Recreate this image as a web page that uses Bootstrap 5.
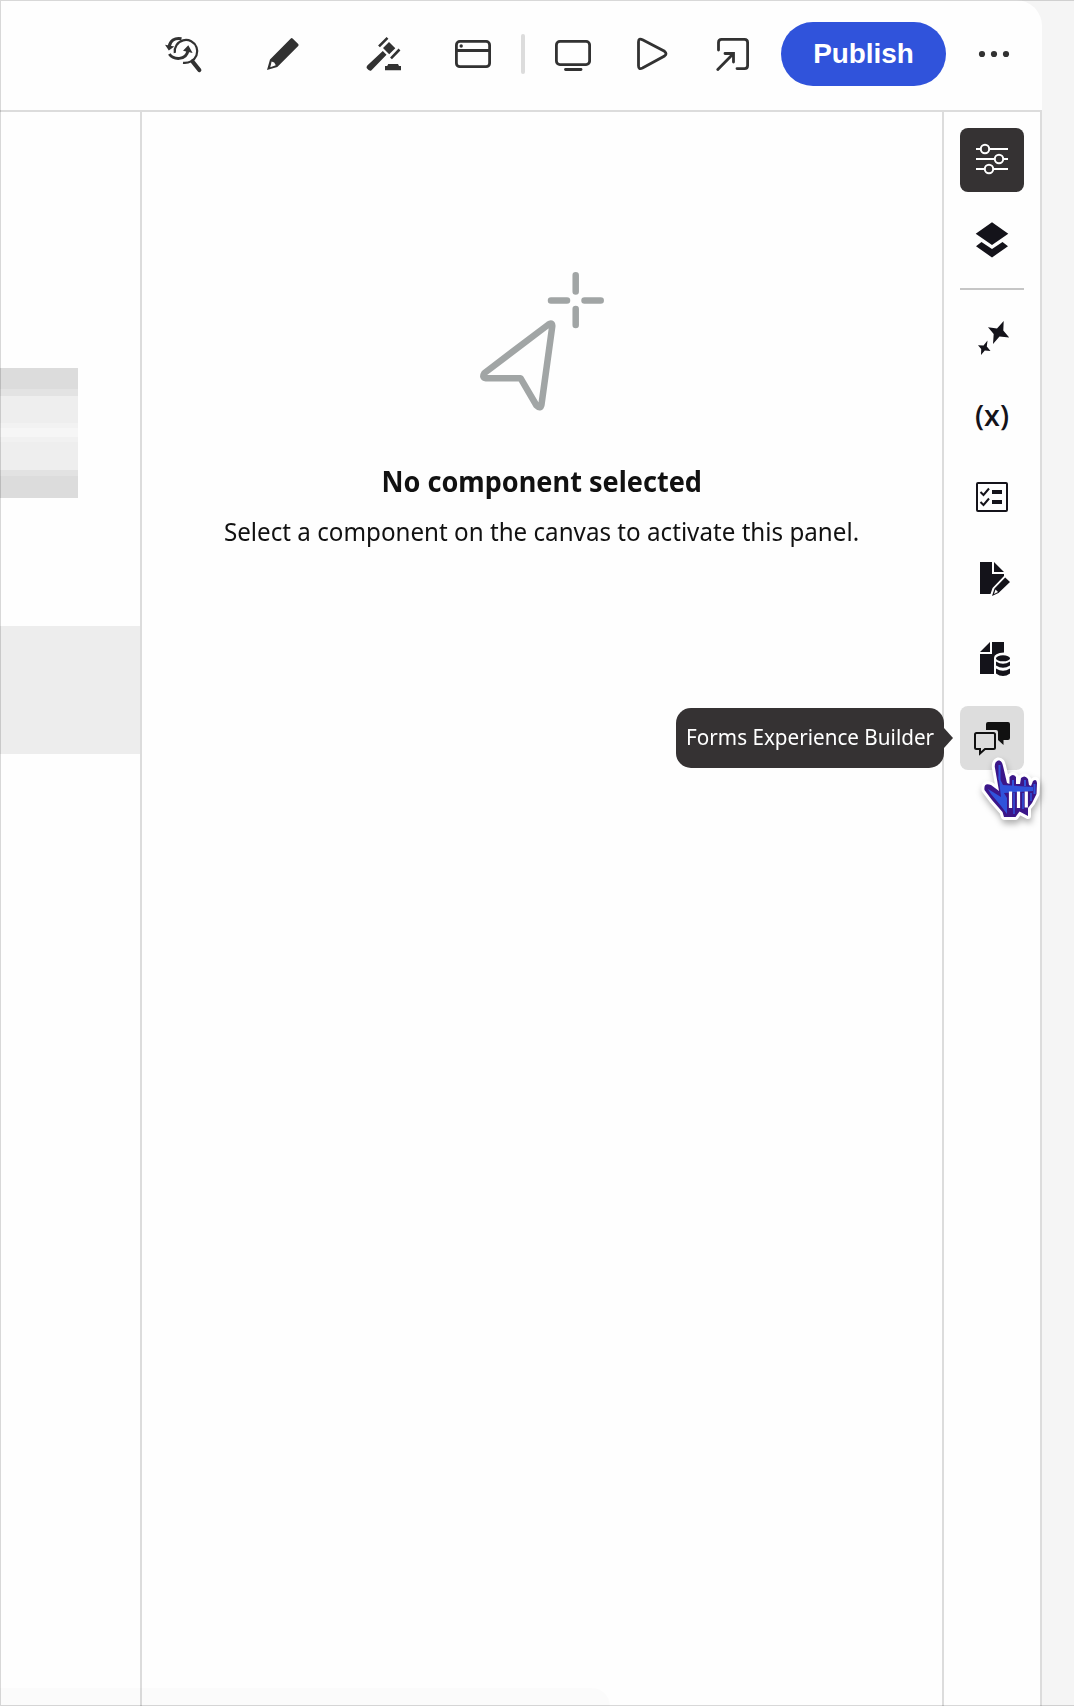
<!DOCTYPE html>
<html lang="en">
<head>
<meta charset="utf-8">
<meta name="viewport" content="width=device-width, initial-scale=1">
<title>Forms editor</title>
<link href="https://cdn.jsdelivr.net/npm/bootstrap@5.3.0/dist/css/bootstrap.min.css" rel="stylesheet">
<style>
body{background:#f5f5f5;font-family:"Noto Sans","Open Sans",sans-serif;color:#111;height:1706px;overflow:hidden}
.frame-line{inset:0;border:solid rgba(0,0,0,.15);border-width:1px 0 1px 1px;pointer-events:none;z-index:9}
.app{width:1042px;height:1706px}
.topbar{height:112px;background:#fefefe;border-bottom:2px solid #dcdcdc;border-radius:0 26px 0 0;padding:22px 32px 24px 165px}
.workspace{background:#fefefe;border-right:2px solid #dcdcdc}
.tool{display:block;border:0;padding:0;background:none;color:#323232}
.tool svg,.rail-btn svg{display:block}
.sep{width:4px;height:40px;border-radius:2px;background:#dcdcdc}
.publish{width:165px;height:64px;font:bold 27.9px "Liberation Sans",sans-serif;background:#3053db;color:#fff;padding:0}
.canvas-col{width:140px;padding-top:256px}
.preview{width:78px;height:130px;background:linear-gradient(#dcdcdc 0 21px,#e3e3e3 21px 28px,#eee 28px 55px,#f2f2f2 55px 60px,#f6f6f6 60px 69px,#f1f1f1 69px 74px,#eee 74px 102px,#e2e2e2 102px 108px,#dcdcdc 108px)}
.section-block{height:128px;margin-top:128px;background:#ededed}
.panel{border:solid #dcdcdc;border-width:0 2px;padding-top:158px}
.panel h1,.panel p,.tip span{white-space:nowrap;margin:0}
.panel h1{font-size:28px;line-height:40px;font-weight:700;margin-top:48px;transform:scaleX(.967)}
.panel p{font-size:26px;line-height:40px;margin-top:10px;transform:scaleX(.93)}
.rail{width:96px;padding-top:16px;gap:16px}
.rail-btn{width:64px;height:64px;border:0;border-radius:8px;padding:0;background:none;color:#14131a}
.rail-btn.on{background:#353233;color:#fff}
.rail-btn.hot{background:#ddd;color:#111}
.rail-line{width:64px;height:2px;background:#c6c6c6}
.tip{right:80px;top:2px;width:268px;height:60px;border-radius:15px;background:#353233;color:#fff;font-size:22.500px;padding-bottom:2px}
.tip span{transform:scaleX(.918)}
.tip:after{content:"";position:absolute;left:100%;top:20px;border:solid transparent;border-width:10px 0 10px 9px;border-left-color:#353233}
.pointer{left:20px;top:46px;z-index:3;filter:drop-shadow(1px 4px 3px rgba(0,0,0,.3))}
.foot-shade{left:0;bottom:0;width:610px;height:18px;background:rgba(0,0,0,.012);border-radius:0 60px 0 0}
</style>
</head>
<body>
<div class="app position-relative d-flex flex-column">
<header class="topbar d-flex align-items-center">
  <button class="tool" aria-label="Find and replace"><svg width="38" height="40" viewBox="165 34 38 40" fill="none" stroke="currentColor"><path d="M174.8 53A11.3 11.3 0 1 1 191 61.4Q187.500 63.300 183 62.800" stroke-width="2.200"/><path d="M192.500 61.500L199.300 70" stroke-width="4.200" stroke-linecap="round"/><path d="M181.500 38.700C174.500 37.500 170 40.500 169.200 46.500M169.300 54C173 59.500 186 61.500 188.200 50" stroke-width="3"/><path d="M165 44.800L174.300 46.500 168.800 50.500ZM188.300 45.300L192.600 53 183 50.800Z" fill="currentColor" stroke="none"/></svg></button>
  <button class="tool" style="margin-left:63px" aria-label="Edit"><svg width="34" height="36" viewBox="266 36 34 36" fill="currentColor"><path fill-rule="evenodd" d="M267 70L270 59.500 290.800 38.500Q291.700 37.600 292.600 38.500L298.200 44Q299.100 45 298.200 46L277.300 67ZM270.300 67.200L275.800 65.300 274.200 62.600 271.600 61.400Z"/></svg></button>
  <button class="tool" style="margin-left:66px" aria-label="Rules"><svg width="36" height="36" viewBox="366 36 36 36" fill="currentColor"><path d="M382.800 51L386.500 54.700 371.500 70.200Q369.500 71.800 366.800 68.300 366 67 367.300 65.500ZM389 42L395.300 48.200 389.200 54.300 383 48ZM388.200 64H398L399 66H401V70.200H385V66H387.200Z"/><path d="M379 46.300L387.500 37.800M391 58.300L399.500 49.500" stroke="currentColor" stroke-width="2.600"/></svg></button>
  <button class="tool" style="margin-left:53px" aria-label="Window"><svg width="36" height="36" viewBox="455 36 36 36" fill="none" stroke="currentColor" stroke-width="2.800"><rect x="456.400" y="41.400" width="33.200" height="25.300" rx="3.500"/><path d="M456 50.500H490"/><circle cx="461.200" cy="46" r="1.700" fill="currentColor" stroke="none"/></svg></button>
  <div class="sep" style="margin-left:30px"></div>
  <button class="tool" style="margin-left:30px" aria-label="Device"><svg width="36" height="36" viewBox="555 36 36 36" fill="none" stroke="currentColor" stroke-width="2.800"><rect x="556.400" y="41.400" width="33.200" height="23.200" rx="3.500"/><path d="M565.500 69.500H581" stroke-linecap="round"/></svg></button>
  <button class="tool" style="margin-left:45px" aria-label="Preview"><svg width="33" height="36" viewBox="636 36 33 36" fill="none" stroke="currentColor" stroke-width="2.800"><path d="M638.500 42Q638.500 37.800 642.500 39.800L664.500 51.300Q667.500 53.700 664.500 56L642.500 68Q638.500 70 638.500 65.800Z"/></svg></button>
  <button class="tool" style="margin-left:47px" aria-label="Open"><svg width="35" height="36" viewBox="716 36 35 36" fill="none" stroke="currentColor" stroke-width="2.800" stroke-linecap="round"><path d="M718.500 50V42.500Q718.500 39.400 721.600 39.400H744.500Q747.600 39.400 747.600 42.500V65.500Q747.600 68.600 744.500 68.600H737M717.800 69.400L733 54M725 53.500H733.500V62"/></svg></button>
  <button class="publish btn rounded-pill" style="margin-left:30px">Publish</button>
  <button class="tool" style="margin-left:32px" aria-label="More"><svg width="32" height="16" viewBox="978 46 32 16" fill="currentColor"><circle cx="982" cy="54" r="3.100"/><circle cx="994" cy="54" r="3.100"/><circle cx="1006" cy="54" r="3.100"/></svg></button>
</header>
<main class="workspace d-flex flex-grow-1">
  <div class="canvas-col flex-shrink-0"><div class="preview"></div><div class="section-block"></div></div>
  <section class="panel flex-grow-1 d-flex flex-column align-items-center">
    <svg width="126" height="143" viewBox="479 270 126 143" fill="none" stroke="#a1a5a5" stroke-width="6.500" stroke-linecap="round" stroke-linejoin="round"><path d="M575.700 275.300V291.500M575.700 309V325M551 300.400H567M584.500 300.400H600.700M548.500 324.500L484.500 373Q481.500 377.800 486 378.200L520.500 378.200 536.500 405.500Q540.500 409.500 541.500 404.500L552.300 326Q552 322 548.500 324.500Z"/></svg>
    <h1>No component selected</h1>
    <p>Select a component on the canvas to activate this panel.</p>
  </section>
  <nav class="rail flex-shrink-0 d-flex flex-column align-items-center">
    <button class="rail-btn on" aria-label="Properties"><svg width="64" height="64" viewBox="960 128 64 64" fill="#353233" stroke="currentColor" stroke-width="2"><path d="M976 149H1008M976 159H1008M976 169H1008"/><circle cx="985" cy="149" r="4.200"/><circle cx="999" cy="159" r="4.200"/><circle cx="989" cy="169" r="4.200"/></svg></button>
    <button class="rail-btn" aria-label="Layers"><svg width="64" height="64" viewBox="960 208 64 64" fill="currentColor"><path d="M992 222.300L1008.300 233.700 992 245 975.700 233.700ZM976 246.200L981.500 242 992 249 1002.500 242 1008 246.200 992 257.500Z"/></svg></button>
    <div class="rail-line"></div>
    <button class="rail-btn" aria-label="Assistant"><svg width="64" height="64" viewBox="960 306 64 64" fill="currentColor"><path d="M1003.700 321L1003.300 330.500 1009.200 337.500 999.500 336.500 993 344 993.700 334 988 327.300 997 328.500ZM987.500 340.500L986.800 346.500 990.500 351 984.800 350.500 981 355 981.200 349 978 345.300 983.500 345.600Z"/></svg></button>
    <button class="rail-btn" aria-label="Variables"><svg width="64" height="64" viewBox="960 386 64 64" fill="currentColor"><text x="975" y="426" font-family="Open Sans, sans-serif" font-weight="600" font-size="29" textLength="34" lengthAdjust="spacingAndGlyphs">(x)</text></svg></button>
    <button class="rail-btn" aria-label="Checklist"><svg width="64" height="64" viewBox="960 466 64 64" fill="none" stroke="currentColor" stroke-width="2"><rect x="977" y="483" width="30" height="28" rx="1"/><path d="M980.500 492L983.500 495 989 488.500M980.500 502L983.500 505 989 498.500"/><path d="M992 492H1002M992 502H1002" stroke-width="3.800"/></svg></button>
    <button class="rail-btn" aria-label="Edit document"><svg width="64" height="64" viewBox="960 546 64 64" fill="currentColor"><path d="M980 562H992V574H1004V576L992.500 588 990.500 594H980ZM994 562L1004 572H994ZM1005.200 577.500L1010 582 998.500 593 992 596 994.500 588.500Z"/><path d="M994 594L995.500 589.500 998 592Z" fill="#fdfdfd"/></svg></button>
    <button class="rail-btn" aria-label="Data source"><svg width="64" height="64" viewBox="960 626 64 64" fill="currentColor"><path d="M980 652L990 642V652ZM992 642H1004V652.500Q994 653 994 658V674H980V654H992Z"/><ellipse cx="1003" cy="658.300" rx="7" ry="3"/><path d="M996 661.500Q1003 666 1010 661.500V665.500Q1003 670 996 665.500ZM996 668.500Q1003 673 1010 668.500V673.500Q1003 678.500 996 673.500Z"/></svg></button>
    <div class="position-relative">
      <button class="rail-btn hot" aria-label="Forms Experience Builder"><svg width="64" height="64" viewBox="960 706 64 64" fill="currentColor"><path d="M988 722H1008Q1010 722 1010 724V738Q1010 740 1008 740H1003.500V745L998 740V732Q998 730 996 730H986V724Q986 722 988 722Z"/><path d="M976.500 733H993.500Q995 733 995 734.500V747.500Q995 749 993.500 749H985L980 753.500V749H976.500Q975 749 975 747.500V734.500Q975 733 976.500 733Z" fill="none" stroke="currentColor" stroke-width="2"/></svg></button>
      <div class="tip position-absolute d-flex align-items-center justify-content-center" role="tooltip"><span>Forms Experience Builder</span></div>
      <svg class="pointer position-absolute" width="66" height="72" viewBox="980 752 66 72"><path d="M998 760.500C1001 760 1002.500 763 1003 766L1007 783 1009.500 784 1009.500 777Q1013 773 1016 777V784L1020 784 1021 778Q1025 774.500 1028 779L1029 785 1031 786 1033 781Q1036.500 778 1037 783L1036.500 794 1032 803 1028 808 1028 816 1019.500 811.500 1015.500 817H1004L1002.500 812 992 800 984.500 790Q983.500 782 991 785L999 791 994.800 767Q994.500 762 998 760.500Z" fill="#3b1689" stroke="#fff" stroke-width="6" stroke-linejoin="round" paint-order="stroke"/><path d="M998.500 776L1003 785 1033 787 1033 791 1004 793 1007 798 1007 814 1001 806 991 794 988 789 1001 797Z" fill="#3053db"/><path d="M999.500 765V780M1013 780V786M1025 780V786M1034.500 784V794" stroke="#3053db" stroke-width="2"/><path d="M1014 793V814M1023 793V809M1031 793V801" stroke="#3053db" stroke-width="1.500"/><path d="M1010.500 791.500V808M1018.500 791.500V808M1026.300 791.500V807.500" stroke="#fff" stroke-width="3.200"/></svg>
    </div>
  </nav>
</main>
<div class="foot-shade position-absolute"></div>
</div>
<div class="frame-line position-absolute"></div>
<script src="https://cdn.jsdelivr.net/npm/bootstrap@5.3.0/dist/js/bootstrap.bundle.min.js"></script>
</body>
</html>
